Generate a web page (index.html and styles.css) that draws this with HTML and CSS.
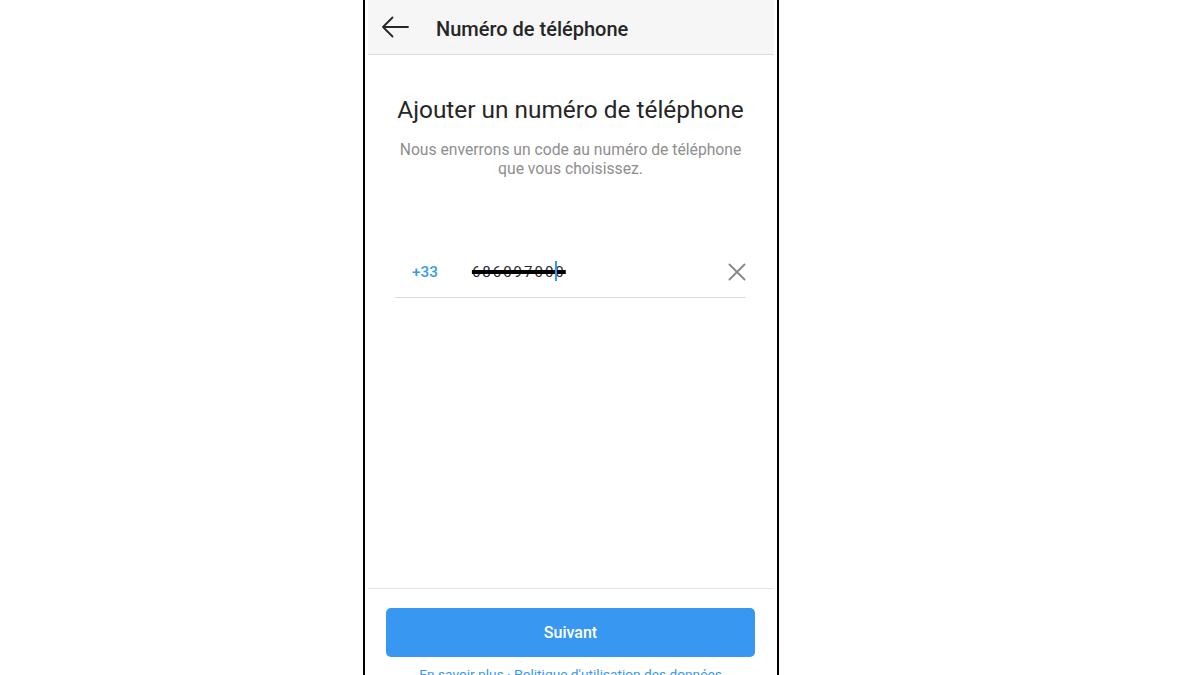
FILE: index.html
```html
<!DOCTYPE html>
<html lang="fr">
<head>
<meta charset="utf-8">
<link rel="stylesheet" href="styles.css">
</head>
<body>
<div class="phone">
  <div class="screen">
    <header class="topbar">
      <svg class="back" width="28" height="22" viewBox="0 0 28 22"><path d="M27 11H2M11.5 1.5L2 11l9.5 9.5" fill="none" stroke="#262626" stroke-width="1.8" stroke-linecap="round" stroke-linejoin="round"/></svg>
      <span class="topbar-title">Numéro de téléphone</span>
    </header>
    <main class="content">
      <h1 class="title">Ajouter un numéro de téléphone</h1>
      <p class="subtitle">Nous enverrons un code au numéro de téléphone<br>que vous choisissez.</p>
      <div class="field">
        <span class="cc">+33</span>
        <span class="number"><span class="digits">686097000</span><span class="caret"></span></span>
        <svg class="clear" width="18" height="18" viewBox="0 0 18 18"><path d="M1.5 1.5l15 15M16.5 1.5l-15 15" stroke="#8a8a8a" stroke-width="2" stroke-linecap="round"/></svg>
      </div>
    </main>
    <footer class="footer">
      <button class="next">Suivant</button>
      <div class="links">En savoir plus · Politique d'utilisation des données</div>
    </footer>
  </div>
</div>
</body>
</html>
```
FILE: styles.css
```css
* { box-sizing: border-box; }
html, body { margin: 0; padding: 0; background: #fff; height: 675px; overflow: hidden; }
body { display: flex; justify-content: flex-start; padding-left: 363px; font-family: Roboto, "Liberation Sans", sans-serif; }
.phone {
  width: 416px;
  height: 675px;
  border-left: 2px solid #000;
  border-right: 2px solid #000;
  padding: 0 3px;
  flex-shrink: 0;
}
.screen { height: 100%; display: flex; flex-direction: column; }
.topbar {
  height: 55px;
  background: #f6f6f6;
  border-bottom: 1px solid #dddddd;
  display: flex;
  align-items: center;
  padding-left: 13px;
  flex-shrink: 0;
}
.back { margin-top: 0; }
.topbar-title { margin-left: 27px; font-size: 20px; font-weight: 500; color: #262626; margin-top: 3px; }
.content { flex: 1; padding: 40px 28px 0 27px; display: flex; flex-direction: column; align-items: center; }
.title { margin: 0; font-size: 24.4px; font-weight: 400; color: #262626; white-space: nowrap; }
.subtitle { margin: 16px 0 0; font-size: 15.7px; line-height: 19px; color: #8e8e8e; text-align: center; white-space: nowrap; }
.field {
  margin-top: 71px;
  width: 100%;
  height: 49px;
  border-bottom: 1px solid #dbdbdb;
  display: flex;
  align-items: center;
  padding-bottom: 2px;
}
.cc { font-size: 15.3px; font-weight: 500; color: #3897f0; margin-left: 17px; }
.number { margin-left: 34px; flex: 1; display: flex; align-items: center; position: relative; }
.digits {
  font-size: 15px;
  color: #262626;
  letter-spacing: 2px;
  text-decoration: line-through;
  text-decoration-thickness: 4px;
  text-decoration-color: #000;
}
.caret { width: 2px; height: 20px; background: #3897f0; position: absolute; left: 83px; top: -2px; }
.footer {
  flex-shrink: 0;
  height: 87px;
  border-top: 1px solid #e6e6e6;
  padding: 19px 19px 0 18px;
}
.next {
  width: 100%;
  height: 49px;
  border: 0;
  border-radius: 5px;
  background: #3897f0;
  color: #fff;
  font-family: Roboto, "Liberation Sans", sans-serif;
  font-size: 16px;
  font-weight: 500;
  padding: 0;
}
.links { margin-top: 9px; text-align: center; font-size: 13.7px; color: #3897f0; white-space: nowrap; }
```
